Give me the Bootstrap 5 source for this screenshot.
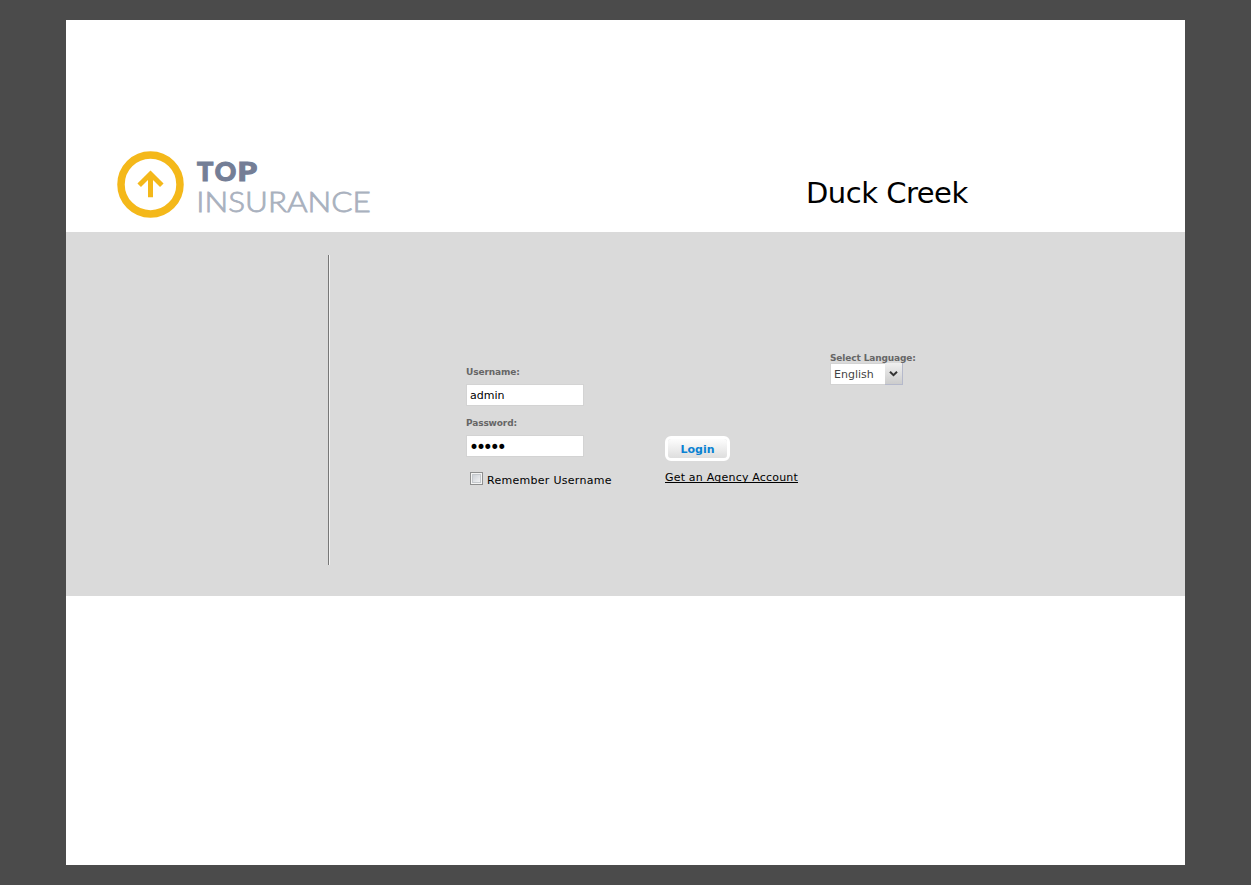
<!DOCTYPE html>
<html lang="en">
<head>
<meta charset="utf-8">
<meta name="viewport" content="width=device-width, initial-scale=1">
<title>Top Insurance - Login</title>
<link href="https://cdn.jsdelivr.net/npm/bootstrap@5.3.0/dist/css/bootstrap.min.css" rel="stylesheet">
<style>
  body { background: #4b4b4b; font-family: Verdana, "DejaVu Sans", sans-serif; font-size: 11px; line-height: 14px; color: #000; }
  .sheet { width: 1119px; height: 845px; margin: 20px 0 0 66px; }
  .masthead { height: 212px; padding: 128px 217px 0 50px; }
  .product { font-size: 29px; line-height: 36px; margin-top: 27px; width: 162px; white-space: nowrap; letter-spacing: -.5px; font-weight: 400; }
  .band { height: 364px; background: #dadada; padding-top: 23px; }
  .rail { width: 264px; height: 310px; border-right: 1px solid #f2f2f2; box-shadow: inset -1px 0 #777; }
  .fields { width: 199px; padding-top: 111px; margin-left: 136px; }
  .caption { display: block; font-size: 9px; line-height: 12px; font-weight: 700; color: #666; white-space: nowrap; letter-spacing: -.13px; }
  .caption.second { margin-top: 11px; }
  .entry.form-control { width: 118px; height: 22px; min-height: 0; margin-top: 6px; padding: 0 3px; border: 1px solid #d3d3d3; font-size: 11px; line-height: 20px; color: #000; background: #fff; }
  .entry.secret.form-control { font-size: 17px; letter-spacing: -3.1px; padding: 1px 0 0 2px; }
  .remember { margin-top: 15px; }
  .remember label { letter-spacing: .28px; padding-top: 2px; }
  .tick.form-check-input { width: 13px; height: 13px; margin: 0 4px 0 4px; border: 1px solid #8e8f8f; border-radius: 0; background: linear-gradient(135deg, #c3c8cf, #fbfbfb); box-shadow: inset 0 0 0 1px #f4f4f4, inset 0 0 0 2px #c4c8cc; }
  .actions { width: 165px; padding-top: 181px; }
  .login.btn { width: 65px; height: 25px; padding: 1px 0 0; border: 3px solid #fff; border-radius: 6px; background: linear-gradient(#fdfdfd, #dedede) padding-box; color: #0a82d2; font-size: 11px; line-height: 20px; font-weight: 700; }
  .signup { color: #000; line-height: 14px; margin-top: 10px; white-space: nowrap; letter-spacing: .19px; text-underline-offset: 1px; text-decoration-skip-ink: none; }
  .lang { padding-top: 97px; }
  .picker { width: 73px; height: 22px; margin-top: -1px; border: 1px solid #d3d3d3; background: #fff; color: #444; padding: 0 0 0 3px; line-height: 20px; font-size: 11px; border-radius: 0; text-align: left; }
  .choice { padding-top: 2px; }
  .drop { width: 18px; height: 22px; margin-right: -1px; background: linear-gradient(#f0f0f0, #ccc); border: 1px solid #b5b9cb; border-width: 0 1px 1px 0; }
</style>
</head>
<body>
<main class="sheet bg-white">
  <header class="masthead d-flex justify-content-between">
    <svg width="260" height="74" viewBox="0 0 260 74" role="img" aria-label="Top Insurance">
      <circle cx="34.5" cy="36.4" r="29.5" fill="none" stroke="#f4b81a" stroke-width="7.5"/>
      <path d="M34.5 49.2V26M23.2 37.3l11.3-11.3L45.8 37.3" fill="none" stroke="#f4b81a" stroke-width="5"/>
      <g font-family="Lato" font-weight="900" font-size="27" fill="#747e96" stroke="#747e96" stroke-width="1.1">
        <text x="81" y="32.5">T</text>
        <text x="98.7" y="32.5" textLength="21.5" lengthAdjust="spacingAndGlyphs">O</text>
        <text x="121.5" y="32.5" textLength="19.5" lengthAdjust="spacingAndGlyphs">P</text>
      </g>
      <text x="80.3" y="63.8" font-family="Lato" font-weight="300" font-size="27.8" fill="#a9b1be" stroke="#a9b1be" stroke-width=".8" textLength="174.5" lengthAdjust="spacingAndGlyphs">INSURANCE</text>
    </svg>
    <h1 class="product mb-0">Duck Creek</h1>
  </header>
  <form class="band d-flex align-items-start">
    <div class="rail"></div>
    <div class="fields">
      <label class="caption" for="user">Username:</label>
      <input class="entry form-control rounded-0 shadow-none" id="user" type="text" value="admin">
      <label class="caption second" for="pass">Password:</label>
      <input class="entry secret form-control rounded-0 shadow-none" id="pass" type="password" value="admin">
      <div class="remember d-flex align-items-start">
        <input class="tick form-check-input flex-shrink-0" type="checkbox" id="keep">
        <label class="text-nowrap" for="keep">Remember Username</label>
      </div>
    </div>
    <div class="actions d-flex flex-column align-items-start">
      <button class="login btn" type="button">Login</button>
      <a class="signup" href="#">Get an Agency Account</a>
    </div>
    <div class="lang">
      <span class="caption">Select Language:</span>
      <button type="button" class="picker d-flex justify-content-between align-items-center">
        <span class="choice">English</span>
        <span class="drop d-flex align-items-center justify-content-center">
          <svg width="9" height="6" viewBox="0 0 9 6"><path d="M1 .7l3.5 3.5L8 .7" fill="none" stroke="#333" stroke-width="2"/></svg>
        </span>
      </button>
    </div>
  </form>
</main>
<script src="https://cdn.jsdelivr.net/npm/bootstrap@5.3.0/dist/js/bootstrap.bundle.min.js"></script>
</body>
</html>
